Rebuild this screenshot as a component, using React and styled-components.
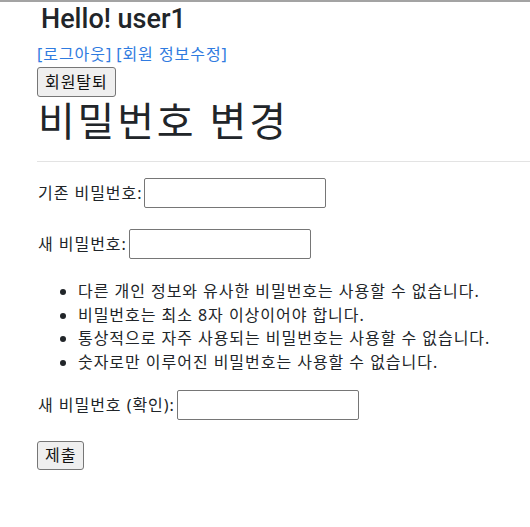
import React from "react";
import styled, { createGlobalStyle } from "styled-components";

const Global = createGlobalStyle`
  html, body { margin: 0; padding: 0; background: #fff; }
  body {
    border-top: 2px solid #a3a3a3;
    font-family: "Noto Sans", "Noto Sans CJK KR", sans-serif;
    font-size: 16px;
    line-height: 1.5;
    color: #212529;
    letter-spacing: 0.06em;
  }
`;

const Page = styled.div`
  padding: 1px 0 40px 37px;
`;

const Greeting = styled.h3`
  margin: 0 0 6px 0;
  height: 33px;
  font-family: Roboto, "Noto Sans", sans-serif;
  font-size: 27px;
  font-weight: 500;
  line-height: 33px;
  letter-spacing: 0;
  padding-left: 4px;
`;

const Nav = styled.div`
  display: flex;
  align-items: center;
  gap: 4px;
  height: 24px;
  line-height: 24px;
`;

const NavLink = styled.a`
  color: #2f7be0;
  text-decoration: none;
  cursor: pointer;
`;

const Button = styled.button`
  display: block;
  font-family: inherit;
  font-size: 16px;
  line-height: 24px;
  letter-spacing: 0.06em;
  color: #111;
  background: #efefef;
  border: 1px solid #767676;
  border-radius: 3px;
  padding: ${(p) => (p.$tight ? "1px 7px 2px" : "2px 7px")};
  margin: ${(p) => p.$margin || "0"};
`;

const Title = styled.h1`
  margin: 0;
  height: 48px;
  font-size: 40px;
  font-weight: 400;
  line-height: 48px;
  letter-spacing: 0.07em;
  padding-left: 1px;
`;

const Rule = styled.hr`
  border: 0;
  border-top: 1px solid #e3e3e3;
  margin: 16px 0;
`;

const Row = styled.p`
  display: flex;
  align-items: center;
  gap: 2px;
  height: 30px;
  margin: 0 0 ${(p) => p.$mb || 21}px 0;
  padding-left: 1px;
`;

const Label = styled.label`
  white-space: nowrap;
`;

const Input = styled.input`
  box-sizing: border-box;
  width: 182px;
  height: 30px;
  border: 1px solid #767676;
  border-radius: 2px;
  padding: 1px 2px;
  font-size: 16px;
  background: #fff;
`;

const HelpList = styled.ul`
  margin: 0 0 16px 0;
  padding-left: 41px;
  line-height: 23.5px;
`;

export default function App() {
  return (
    <>
      <Global />
      <Page>
        <Greeting>Hello! user1</Greeting>
        <Nav>
          <NavLink>[로그아웃]</NavLink>
          <NavLink>[회원 정보수정]</NavLink>
        </Nav>
        <Button $margin="1px 0 0 0">회원탈퇴</Button>
        <Title>비밀번호 변경</Title>
        <Rule />
        <form onSubmit={(e) => e.preventDefault()}>
          <Row>
            <Label htmlFor="old">기존 비밀번호:</Label>
            <Input id="old" type="password" />
          </Row>
          <Row>
            <Label htmlFor="new1">새 비밀번호:</Label>
            <Input id="new1" type="password" />
          </Row>
          <HelpList>
            <li>다른 개인 정보와 유사한 비밀번호는 사용할 수 없습니다.</li>
            <li>비밀번호는 최소 8자 이상이어야 합니다.</li>
            <li>통상적으로 자주 사용되는 비밀번호는 사용할 수 없습니다.</li>
            <li>숫자로만 이루어진 비밀번호는 사용할 수 없습니다.</li>
          </HelpList>
          <Row $mb={21}>
            <Label htmlFor="new2">새 비밀번호 (확인):</Label>
            <Input id="new2" type="password" />
          </Row>
          <Button $tight type="submit">제출</Button>
        </form>
      </Page>
    </>
  );
}
